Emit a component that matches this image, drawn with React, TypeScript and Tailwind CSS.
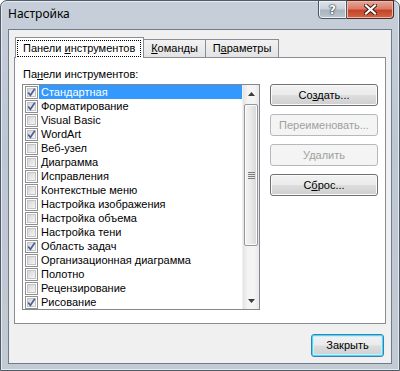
import clsx from 'clsx';

const toolbars: { name: string; checked: boolean }[] = [
  { name: 'Стандартная', checked: true },
  { name: 'Форматирование', checked: true },
  { name: 'Visual Basic', checked: false },
  { name: 'WordArt', checked: true },
  { name: 'Веб-узел', checked: false },
  { name: 'Диаграмма', checked: false },
  { name: 'Исправления', checked: false },
  { name: 'Контекстные меню', checked: false },
  { name: 'Настройка изображения', checked: false },
  { name: 'Настройка объема', checked: false },
  { name: 'Настройка тени', checked: false },
  { name: 'Область задач', checked: true },
  { name: 'Организационная диаграмма', checked: false },
  { name: 'Полотно', checked: false },
  { name: 'Рецензирование', checked: false },
  { name: 'Рисование', checked: true },
];

const CheckBox = ({ checked }: { checked: boolean }) => (
  <span className="relative w-[13px] h-[13px] shrink-0 border border-[#8e8f8f] bg-white p-[1px]">
    <span className="block w-full h-full border border-[#c4c4c4] bg-[linear-gradient(135deg,#d5d5d5,#f6f6f6)]" />
    {checked && (
      <svg className="absolute left-0 top-0" width="11" height="11" viewBox="0 0 11 11">
        <path d="M2.2 5.6 L4.4 8.3 L8.8 1.8" fill="none" stroke="#4a5e93" strokeWidth="1.6" />
      </svg>
    )}
  </span>
);

const Button = ({
  children,
  disabled,
  isDefault,
  className,
}: {
  children: React.ReactNode;
  disabled?: boolean;
  isDefault?: boolean;
  className?: string;
}) => (
  <div
    className={clsx(
      'flex items-center justify-center rounded-[3px] border text-[11px] leading-none',
      disabled
        ? 'border-[#b5b9bc] bg-[#f4f4f4] text-[#a0a0a0]'
        : 'bg-[linear-gradient(#f2f2f2_0%,#ebebeb_48%,#dddddd_52%,#cfcfcf_100%)] text-black',
      !disabled && !isDefault && 'border-[#707070] shadow-[inset_0_0_0_1px_#fafafa]',
      isDefault && 'border-[#3c7fb1] shadow-[inset_0_0_0_1px_#48d8fb,inset_0_0_0_2px_#c8eefc]',
      className,
    )}
  >
    {children}
  </div>
);

const ScrollBar = () => (
  <div className="w-[17px] h-full flex flex-col bg-[linear-gradient(90deg,#e4e4e4,#f4f4f4_30%,#f4f4f4_70%,#e8e8e8)] border-l border-[#f0f0f0]">
    <div className="h-[17px] flex items-center justify-center">
      <svg width="7" height="4" viewBox="0 0 7 4">
        <path d="M0 4 L3.5 0 L7 4 Z" fill="#3b3b3b" />
      </svg>
    </div>
    <div className="h-[2px]" />
    <div className="mx-[1px] h-[142px] rounded-[2px] border border-[#979797] bg-[linear-gradient(90deg,#f3f3f3,#e9e9e9_50%,#d6d6d6)] shadow-[inset_0_0_0_1px_#fbfbfb] flex flex-col items-center justify-center gap-[1px]">
      <span className="w-[7px] h-px bg-[#7d7d7d]" />
      <span className="w-[7px] h-px bg-[#7d7d7d]" />
      <span className="w-[7px] h-px bg-[#7d7d7d]" />
      <span className="w-[7px] h-px bg-[#7d7d7d]" />
    </div>
    <div className="flex-1" />
    <div className="h-[17px] flex items-center justify-center">
      <svg width="7" height="4" viewBox="0 0 7 4">
        <path d="M0 0 L7 0 L3.5 4 Z" fill="#3b3b3b" />
      </svg>
    </div>
  </div>
);

const App = () => {
  return (
    <div className="w-[400px] h-[371px] overflow-hidden font-['Liberation_Sans',Arial,sans-serif] text-[11px] text-black">
      <div className="w-full h-full flex flex-col rounded-t-[7px] border border-[#4f5b67] bg-[linear-gradient(180deg,#c6cfd9_0%,#bdc7d2_40%,#c2cad3_100%)] shadow-[inset_0_0_0_1px_#e4eaf0]">
        {/* Title bar */}
        <div className="h-[28px] flex items-start justify-between shrink-0">
          <div className="pl-[7px] pt-[5px] font-['Noto_Sans',sans-serif] text-[12px] leading-[16px] text-black">
            Настройка
          </div>
          <div className="flex mr-[5px] -mt-px">
            <div className="w-[29px] h-[19px] rounded-bl-[4px] border border-[#4a5562] bg-[linear-gradient(180deg,#dfe4ea_0%,#c9d0d8_45%,#aab4bf_55%,#bcc6d1_100%)] shadow-[inset_0_0_0_1px_#eef2f6] flex items-center justify-center">
              <span className="font-['DejaVu_Sans',sans-serif] font-bold text-[12px] leading-none text-white [text-shadow:0_0_1px_#2c3440,0_0_1px_#2c3440,0_0_2px_#2c3440]">
                ?
              </span>
            </div>
            <div className="w-[47px] h-[19px] rounded-br-[4px] border border-l-0 border-[#4a2a24] bg-[linear-gradient(180deg,#e8a797_0%,#da7d69_45%,#c6432a_55%,#d36543_100%)] shadow-[inset_0_0_0_1px_#f0b8a8] flex items-center justify-center">
              <svg width="13" height="11" viewBox="0 0 13 11">
                <path d="M2 1.5 L11 9.5 M11 1.5 L2 9.5" stroke="#3a1810" strokeWidth="4" strokeLinecap="square" />
                <path d="M2 1.5 L11 9.5 M11 1.5 L2 9.5" stroke="#ffffff" strokeWidth="2.2" strokeLinecap="square" />
              </svg>
            </div>
          </div>
        </div>

        {/* Client area */}
        <div className="mx-[7px] flex-1 mb-[6px] border border-[#6e7c8b] bg-[#f0f0f0] flex flex-col pt-[7px] pl-[5px] pr-[6px]">
          {/* Tabs */}
          <div className="flex items-end h-[20px] pl-px">
            <div className="relative z-10 -mb-px w-[129px] h-[21px] border border-b-0 border-[#898c95] bg-white flex items-start pt-[2px] pl-px">
              <span className="border border-dotted border-black px-[5px] h-[17px] leading-[15px]">
                Панели <span className="underline">и</span>нструментов
              </span>
            </div>
            <div className="w-[62px] h-[18px] border border-l-0 border-b-0 border-[#898c95] bg-[linear-gradient(180deg,#f2f2f2,#e3e3e3)] flex items-center justify-center leading-none">
              <span>
                <span className="underline">К</span>оманды
              </span>
            </div>
            <div className="w-[73px] h-[18px] border border-l-0 border-b-0 border-[#898c95] bg-[linear-gradient(180deg,#f2f2f2,#e3e3e3)] flex items-center justify-center leading-none">
              <span>
                П<span className="underline">а</span>раметры
              </span>
            </div>
          </div>

          {/* Pane */}
          <div className="w-[372px] h-[267px] border border-[#898c95] bg-white pl-[7px] pt-[10px]">
            <div className="h-[13px] leading-[13px] mb-[3px] pl-px">
              Па<span className="underline">н</span>ели инструментов:
            </div>
            <div className="flex items-start">
              <div className="w-[238px] h-[226px] border border-[#828790] bg-white flex">
                <div className="flex-1 flex flex-col">
                  {toolbars.map((t, i) => (
                    <div key={t.name} className="h-[14px] flex items-center pl-[2px]">
                      <CheckBox checked={t.checked} />
                      <span
                        className={clsx(
                          'ml-px flex-1 h-[14px] pl-[2px] leading-[14px] whitespace-nowrap',
                          i === 0 ? 'bg-[#3399ff] text-white' : 'text-black',
                        )}
                      >
                        {t.name}
                      </span>
                    </div>
                  ))}
                </div>
                <ScrollBar />
              </div>

              <div className="ml-[10px] w-[108px] flex flex-col gap-[8px]">
                <Button className="h-[22px]">
                  <span>
                    Со<span className="underline">з</span>дать...
                  </span>
                </Button>
                <Button disabled className="h-[22px]">
                  Переименовать...
                </Button>
                <Button disabled className="h-[22px]">
                  Удалить
                </Button>
                <Button className="h-[22px]">
                  <span>
                    С<span className="underline">б</span>рос...
                  </span>
                </Button>
              </div>
            </div>
          </div>

          {/* Footer */}
          <div className="flex justify-end pt-[10px] pr-px">
            <Button isDefault className="w-[73px] h-[23px]">
              Закрыть
            </Button>
          </div>
        </div>
      </div>
    </div>
  );
};

export default App;
